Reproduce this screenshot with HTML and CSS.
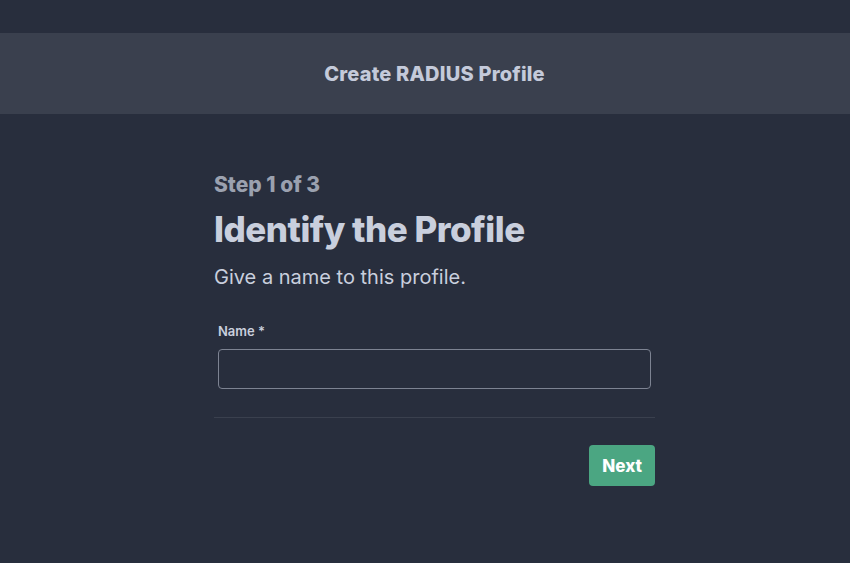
FILE: index.html
```html
<!DOCTYPE html>
<html lang="en">
<head>
    <meta charset="UTF-8">
    <meta name="viewport" content="width=device-width, initial-scale=1.0">
    <title>Create RADIUS Profile</title>
    <link rel="stylesheet" href="styles.css">
</head>
<body>
    <div class="page">
        <!-- header bar -->
        <header class="top-bar">
            <h1>Create RADIUS Profile</h1>
        </header>

        <!-- wizard step -->
        <main class="content">
            <div class="wizard">
                <div class="step-label">Step 1 of 3</div>
                <h2 class="step-title">Identify the Profile</h2>
                <p class="step-desc">Give a name to this profile.</p>

                <form class="step-form">
                    <div class="field">
                        <label for="profile-name">Name *</label>
                        <input type="text" id="profile-name">
                    </div>
                    <div class="divider"></div>
                    <div class="actions">
                        <button type="button" class="btn-next">Next</button>
                    </div>
                </form>
            </div>
        </main>
    </div>
</body>
</html>
```

FILE: styles.css
```css
/* base */
body {
    margin: 0;
    padding: 0;
    background-color: #282e3d;
    font-family: 'Inter', 'Liberation Sans', sans-serif;
    color: #c9cfdd;
}

.page {
    height: 563px;
    padding-top: 33px;
    box-sizing: border-box;
}

/* header */
.top-bar {
    background-color: #3a404e;
    height: 81px;
    padding-left: 19px;
    display: flex;
    align-items: center;
    justify-content: center;
}

.top-bar h1 {
    margin: 0;
    font-size: 20px;
    font-weight: 800;
    color: #c4cada;
    letter-spacing: 0.2px;
}

/* wizard */
.content {
    padding-left: 19px;
}

.wizard {
    width: 441px;
    margin: 0 auto;
    padding-top: 57px;
}

.step-label {
    font-size: 21px;
    font-weight: 800;
    color: #9ba1af;
    line-height: 28px;
    letter-spacing: 0;
}

.step-title {
    margin: 10px 0 0;
    font-size: 35px;
    font-weight: 800;
    line-height: 40px;
    color: #c9cfdd;
    letter-spacing: -0.5px;
}

.step-desc {
    margin: 15px 0 0;
    font-size: 20px;
    line-height: 26px;
    color: #c9cfdd;
    letter-spacing: 0;
}

/* form */
.step-form {
    margin-top: 32px;
}

.field {
    padding: 0 4px;
}

.field label {
    display: block;
    font-size: 13px;
    font-weight: 600;
    color: #c9cfdd;
    line-height: 18px;
    margin-bottom: 9px;
}

.field input {
    display: block;
    width: 100%;
    height: 40px;
    box-sizing: border-box;
    background-color: transparent;
    border: 1px solid #7d8392;
    border-radius: 4px;
    color: #c9cfdd;
    font-size: 15px;
    padding: 0 12px;
}

.divider {
    height: 1px;
    background-color: #3a404e;
    margin-top: 28px;
}

.actions {
    display: flex;
    justify-content: flex-end;
    margin-top: 27px;
}

.btn-next {
    height: 41px;
    padding: 0 13px;
    background-color: #4ba682;
    color: #fff;
    border: none;
    border-radius: 4px;
    font-family: 'Inter', 'Liberation Sans', sans-serif;
    font-size: 17px;
    font-weight: 800;
    cursor: pointer;
}
```
